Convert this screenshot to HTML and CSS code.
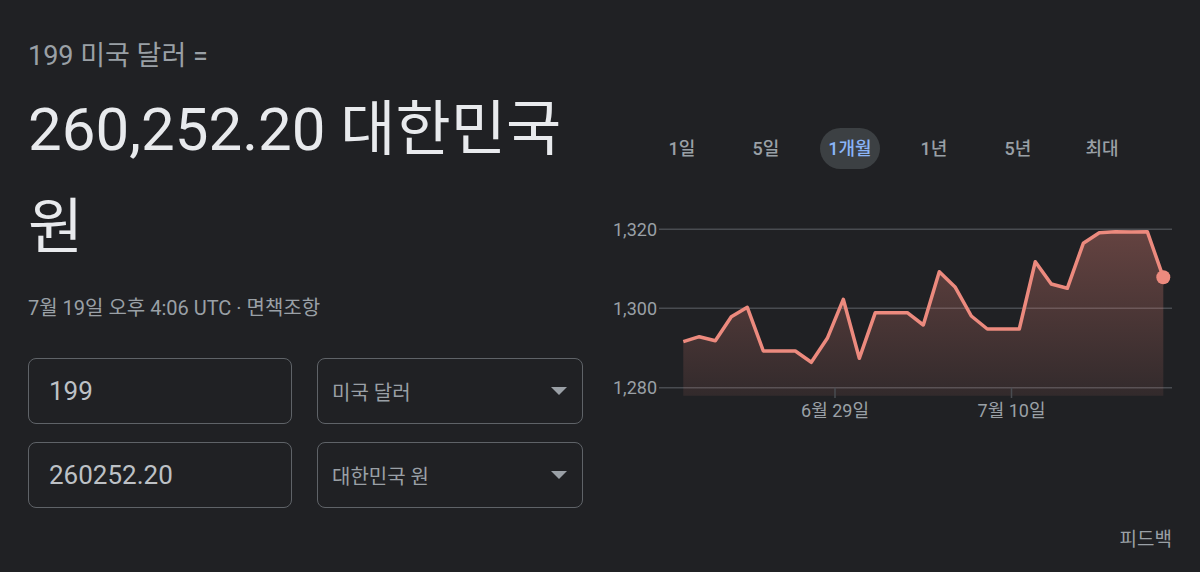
FILE: index.html
```html
<!DOCTYPE html>
<html lang="ko">
<head>
  <meta charset="UTF-8">
  <title>환율 변환</title>
  <link rel="stylesheet" href="styles.css">
</head>
<body>
  <div class="page">
    <div class="converter">
      <div class="src-line">199 미국 달러 =</div>
      <div class="result">260,252.20 대한민국 원</div>
      <div class="stamp">7월 19일 오후 4:06 UTC · 면책조항</div>

      <div class="fields">
        <div class="box amount">199</div>
        <div class="box currency">
          <span>미국 달러</span>
          <span class="caret"></span>
        </div>
        <div class="box amount">260252.20</div>
        <div class="box currency">
          <span>대한민국 원</span>
          <span class="caret"></span>
        </div>
      </div>
    </div>

    <div class="chart-side">
      <div class="tabs">
        <div class="tab"><span>1일</span></div>
        <div class="tab"><span>5일</span></div>
        <div class="tab active"><span>1개월</span></div>
        <div class="tab"><span>1년</span></div>
        <div class="tab"><span>5년</span></div>
        <div class="tab"><span>최대</span></div>
      </div>

      <svg class="chart" width="600" height="240" viewBox="0 0 600 240">
        <defs>
          <linearGradient id="area" x1="0" y1="0" x2="0" y2="1">
            <stop offset="0" stop-color="#ee877a" stop-opacity="0.33"/>
            <stop offset="1" stop-color="#ee877a" stop-opacity="0.09"/>
          </linearGradient>
        </defs>

        <!-- grid -->
        <line class="grid" x1="59" y1="39.3" x2="572" y2="39.3"/>
        <line class="grid" x1="59" y1="118.3" x2="572" y2="118.3"/>
        <line class="grid" x1="59" y1="197.7" x2="572" y2="197.7"/>
        <text class="axis" x="57" y="39.3" text-anchor="end" dominant-baseline="central">1,320</text>
        <text class="axis" x="57" y="118.3" text-anchor="end" dominant-baseline="central">1,300</text>
        <text class="axis" x="57" y="197.7" text-anchor="end" dominant-baseline="central">1,280</text>

        <polygon fill="url(#area)" points="83.3,151.7 99.3,146.7 115.3,150.7 131.3,126.7 147.3,117.3 163.3,161 179.3,161 195.3,161 211.3,172.3 227.3,148.3 243.3,109.3 259.3,168.3 275.3,122.7 291.3,122.7 307.3,122.7 323.3,135 339.3,81.7 355.3,97.3 371.3,126 387.3,139 403.3,139 419.3,139 435.3,71.7 451.3,94 467.3,98.3 483.3,53.3 499.3,42.7 515.3,41.7 531.3,42 547.3,41.7 563.3,87.3 563.3,205.7 83.3,205.7"/>

        <!-- x ticks -->
        <line class="grid" x1="235" y1="197.7" x2="235" y2="208"/>
        <line class="grid" x1="411.5" y1="197.7" x2="411.5" y2="208"/>
        <text class="axis" x="235" y="220" text-anchor="middle" dominant-baseline="central">6월 29일</text>
        <text class="axis" x="411.5" y="220" text-anchor="middle" dominant-baseline="central">7월 10일</text>

        <polyline class="rate" points="83.3,151.7 99.3,146.7 115.3,150.7 131.3,126.7 147.3,117.3 163.3,161 179.3,161 195.3,161 211.3,172.3 227.3,148.3 243.3,109.3 259.3,168.3 275.3,122.7 291.3,122.7 307.3,122.7 323.3,135 339.3,81.7 355.3,97.3 371.3,126 387.3,139 403.3,139 419.3,139 435.3,71.7 451.3,94 467.3,98.3 483.3,53.3 499.3,42.7 515.3,41.7 531.3,42 547.3,41.7 563.3,87.3"/>
        <circle cx="563.3" cy="87.3" r="7" fill="#ec8a7e"/>
      </svg>

      <div class="feedback">피드백</div>
    </div>
  </div>
</body>
</html>
```

FILE: styles.css
```css
* {
  box-sizing: border-box;
}

body {
  margin: 0;
  background: #202124;
  color: #9aa0a6;
  font-family: Roboto, "Noto Sans CJK KR", sans-serif;
  overflow: hidden;
}

.page {
  display: flex;
  height: 572px;
  padding-left: 28px;
}

/* left: converter */
.converter {
  width: 555px;
  padding-top: 41px;
}

.src-line {
  font-size: 27px;
  line-height: 30px;
}

.result {
  margin-top: 10px;
  color: #e8eaed;
  font-size: 60px;
  line-height: 98px;
}

.stamp {
  margin-top: 17px;
  font-size: 20px;
  line-height: 28px;
}

.fields {
  margin-top: 36px;
  display: grid;
  grid-template-columns: 264px 266px;
  grid-auto-rows: 66px;
  column-gap: 25px;
  row-gap: 18px;
}

.box {
  border: 1px solid #5f6368;
  border-radius: 8px;
  display: flex;
  align-items: center;
}

.amount {
  padding-left: 20px;
  color: #bdc1c6;
  font-size: 26px;
}

.currency {
  padding: 0 15px 0 14px;
  justify-content: space-between;
  font-size: 20px;
}

.caret {
  width: 0;
  height: 0;
  border-left: 8.5px solid transparent;
  border-right: 8.5px solid transparent;
  border-top: 8px solid #9aa0a6;
}

/* right: chart */
.chart-side {
  flex: 1;
  margin-left: 17px;
  display: flex;
  flex-direction: column;
}

.tabs {
  display: flex;
  padding: 128px 0 0 40px;
}

.tab {
  width: 84px;
  display: flex;
  justify-content: center;
  font-size: 18px;
  font-weight: 500;
}

.tab span {
  height: 41px;
  line-height: 41px;
  padding: 0 8px;
  border-radius: 21px;
}

.tab.active span {
  background: #3c4043;
  color: #8ab4f8;
}

.chart {
  display: block;
  margin-top: 21px;
}

.grid {
  stroke: #494c51;
  stroke-width: 1.5;
}

.axis {
  fill: #9aa0a6;
  font-size: 18px;
  font-family: Roboto, "Noto Sans CJK KR", sans-serif;
}

.rate {
  fill: none;
  stroke: #ec8a7e;
  stroke-width: 3.5;
  stroke-linejoin: round;
}

.feedback {
  margin-top: auto;
  align-self: flex-end;
  padding: 0 28px 14px 0;
  font-size: 19px;
  line-height: 36px;
}
```
